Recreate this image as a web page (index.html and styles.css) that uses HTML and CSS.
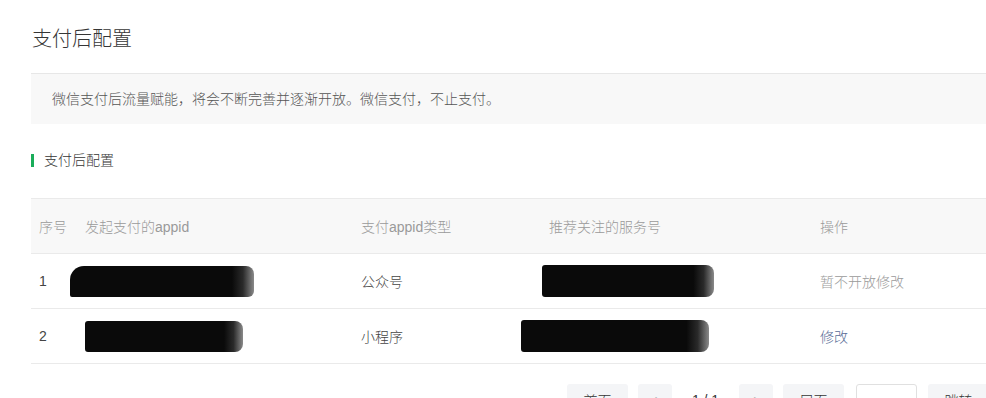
FILE: index.html
```html
<!DOCTYPE html>
<html lang="zh-CN">
<head>
<meta charset="utf-8">
<title>支付后配置</title>
<link rel="stylesheet" href="styles.css">
</head>
<body>
<div class="page">
  <h1 class="page-title">支付后配置</h1>
  <div class="notice">微信支付后流量赋能，将会不断完善并逐渐开放。微信支付，不止支付。</div>
  <h2 class="section-title">支付后配置</h2>
  <table class="cfg-table">
    <colgroup>
      <col class="c1"><col class="c2"><col class="c3"><col class="c4"><col class="c5">
    </colgroup>
    <thead>
      <tr>
        <th>序号</th>
        <th>发起支付的appid</th>
        <th>支付appid类型</th>
        <th>推荐关注的服务号</th>
        <th>操作</th>
      </tr>
    </thead>
    <tbody>
      <tr>
        <td>1</td>
        <td><span class="blob blob-a"></span></td>
        <td>公众号</td>
        <td><span class="blob blob-c"></span></td>
        <td class="muted">暂不开放修改</td>
      </tr>
      <tr>
        <td>2</td>
        <td><span class="blob blob-b"></span></td>
        <td>小程序</td>
        <td><span class="blob blob-d"></span></td>
        <td><a class="link" href="#">修改</a></td>
      </tr>
    </tbody>
  </table>
  <div class="pager">
    <button class="pg-btn wide">首页</button>
    <button class="pg-btn arrow">‹</button>
    <span class="pg-num">1 / 1</span>
    <button class="pg-btn arrow">›</button>
    <button class="pg-btn wide">尾页</button>
    <input class="pg-input" type="text">
    <button class="pg-btn wide">跳转</button>
  </div>
</div>
</body>
</html>
```

FILE: styles.css
```css
html, body {
  margin: 0;
  padding: 0;
  overflow: hidden;
  background: #fff;
}
body {
  font-family: "Liberation Sans", "Noto Sans CJK SC", sans-serif;
  font-weight: 300;
  color: #353535;
  font-size: 14px;
}
.page {
  margin-left: 31px;
  width: 960px;
  padding-top: 25px;
}
.page-title {
  margin: 0;
  font-size: 20px;
  font-weight: 300;
  line-height: 28px;
  color: #353535;
  padding-left: 1px;
  padding-bottom: 20px;
  border-bottom: 1px solid #e7e7e7;
}
.notice {
  background: #f8f8f8;
  height: 50px;
  line-height: 50px;
  padding-left: 21px;
  color: #555;
  font-size: 14px;
}
.section-title {
  margin: 30px 0 0 0;
  font-size: 14px;
  font-weight: 300;
  line-height: 13px;
  height: 13px;
  border-left: 3px solid #1aad5a;
  padding-left: 10px;
  color: #353535;
}
.cfg-table {
  margin-top: 31px;
  width: 100%;
  border-collapse: collapse;
  table-layout: fixed;
  border-top: 1px solid #eaeaea;
}
.c1 { width: 46px; }
.c2 { width: 276px; }
.c3 { width: 188px; }
.c4 { width: 271px; }
.c5 { width: auto; }
.cfg-table th {
  background: #f8f8f8;
  color: #9a9a9a;
  font-weight: 300;
  text-align: left;
  height: 54px;
  padding: 0 8px;
  border-bottom: 1px solid #eaeaea;
}
.cfg-table td {
  height: 54px;
  padding: 0 8px;
  border-bottom: 1px solid #eaeaea;
  vertical-align: middle;
  color: #444;
}
.cfg-table td.muted { color: #9a9a9a; }
.link { color: #576b95; text-decoration: none; }
.blob {
  display: inline-block;
  vertical-align: middle;
  background: linear-gradient(90deg, #0a0a0a 0%, #0a0a0a 88%, #2a2a2a 94%, rgba(60,60,60,0.6) 100%);
  border-radius: 3px 8px 8px 3px;
}
.blob-a { width: 184px; height: 31px; margin-left: -15px; border-radius: 14px 8px 6px 2px; }
.blob-b { width: 158px; height: 31px; margin-left: 0; }
.blob-c { width: 172px; height: 32px; margin-left: -7px; }
.blob-d { width: 188px; height: 32px; margin-left: -28px; }
.pager {
  margin-top: 20px;
  display: flex;
  justify-content: flex-end;
  align-items: center;
  padding-right: 2px;
}
.pg-btn {
  font-family: inherit;
  font-weight: 300;
  font-size: 14px;
  color: #353535;
  background: #f4f5f7;
  border: none;
  border-radius: 3px;
  height: 32px;
  padding: 0;
}
.pg-btn.wide { width: 61px; }
.pg-btn.arrow { width: 34px; color: #888; font-size: 16px; }
.pg-btn + .pg-btn { margin-left: 10px; }
.pg-num {
  width: 67px;
  text-align: center;
  color: #353535;
}
.pg-input {
  width: 59px;
  height: 30px;
  border: 1px solid #e0e0e0;
  border-radius: 3px;
  padding: 0;
  margin: 0 11px 0 12px;
}
.pg-input + .pg-btn { margin-left: 0; }
```
